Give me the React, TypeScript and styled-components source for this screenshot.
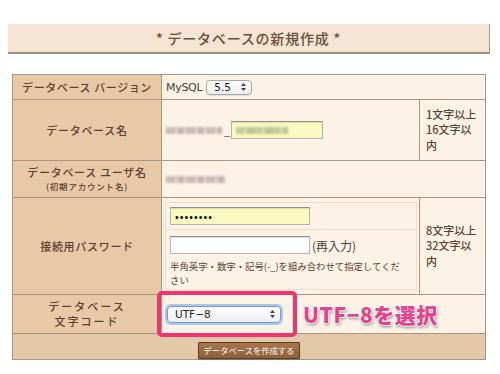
import React from "react";
import styled, { createGlobalStyle } from "styled-components";

const GlobalStyle = createGlobalStyle`
  html, body {
    margin: 0;
    padding: 0;
    background: #fff;
  }
  body {
    font-family: "Noto Sans CJK JP", "DejaVu Sans", sans-serif;
    color: #5b4131;
  }
`;

const Page = styled.div`
  width: 500px;
  height: 374px;
  padding-top: 24px;
  box-sizing: border-box;
  overflow: hidden;
`;

const Heading = styled.h2`
  margin: 0 0 0 8px;
  width: 482px;
  height: 30px;
  box-sizing: border-box;
  background: #f3e4d3;
  border-bottom: 2px solid #a48e7a;
  border-right: 1px solid #b29c88;
  color: #6a4d3b;
  font-size: 14px;
  font-weight: 500;
  letter-spacing: 0.8px;
  line-height: 28px;
  text-align: center;
`;

const FormTable = styled.table`
  margin: 20px 0 0 12px;
  width: 473px;
  border-collapse: collapse;
  table-layout: fixed;
  border: 1px solid #a9947f;
`;

const Col = styled.col<{ $w: number }>`
  width: ${(p) => p.$w}px;
`;

const Row = styled.tr<{ $h: number }>`
  height: ${(p) => p.$h}px;
`;

const LabelCell = styled.th<{ $spacing?: number }>`
  background: #e7c8a7;
  border: 1px solid #a9947f;
  color: #5b4131;
  font-size: 11px;
  font-weight: 500;
  letter-spacing: ${(p) => (p.$spacing ?? 0.7)}px;
  line-height: 15px;
  text-align: center;
  vertical-align: middle;
  padding: 0;
  white-space: nowrap;
`;

const SubLabel = styled.span`
  display: block;
  font-size: 8.5px;
  letter-spacing: 0.8px;
  line-height: 13px;
`;

const ValueCell = styled.td<{ $pad?: string }>`
  background: #fdf2e6;
  border: 1px solid #a9947f;
  color: #444;
  font-size: 11px;
  line-height: 15px;
  vertical-align: middle;
  padding: ${(p) => p.$pad ?? "0 4px"};
`;

const NoteCell = styled.td`
  background: #fdf2e6;
  border: 1px solid #a9947f;
  color: #5b4131;
  font-size: 11px;
  font-weight: 500;
  line-height: 15.5px;
  vertical-align: middle;
  padding: 0 4px 0 6px;
  white-space: nowrap;
`;

const FooterCell = styled.td`
  background: #e3c8aa;
  border: 1px solid #a9947f;
  text-align: center;
  vertical-align: middle;
  padding: 0;
`;

const Line = styled.div`
  display: flex;
  align-items: center;
`;

const Mosaic = styled.span<{ $w: number; $tone: "brown" | "green" }>`
  display: inline-block;
  width: ${(p) => p.$w}px;
  height: 7px;
  background: ${(p) =>
    p.$tone === "brown"
      ? "repeating-linear-gradient(90deg, #cbbdb6 0 9px, #ddd1ca 9px 12px, #c4b6ae 12px 18px, #e6ddd6 18px 20px)"
      : "repeating-linear-gradient(90deg, #c4cc9a 0 8px, #d6dca8 8px 11px, #bcc493 11px 18px)"};
  filter: blur(0.8px);
`;

const TextInput = styled.span<{ $w: number; $fill?: boolean }>`
  display: inline-flex;
  align-items: center;
  box-sizing: border-box;
  width: ${(p) => p.$w}px;
  height: 18px;
  padding: 0 4px;
  background: ${(p) => (p.$fill ? "#f9fbc0" : "#fff")};
  border: 1px solid #b4b4b4;
  border-top-color: #8e8e8e;
  box-shadow: inset 0 1px 1px rgba(0, 0, 0, 0.12);
  color: #111;
  font-size: 11px;
  letter-spacing: 1px;
`;

const Underscore = styled.span`
  margin: 0 1px 0 2px;
  color: #555;
  font-size: 11px;
`;

const SelectBox = styled.span<{ $w: number; $focus?: boolean }>`
  display: inline-flex;
  align-items: center;
  justify-content: space-between;
  box-sizing: border-box;
  width: ${(p) => p.$w}px;
  height: ${(p) => (p.$focus ? 17 : 15)}px;
  padding: 0 5px 0 7px;
  border-radius: 4px;
  background: linear-gradient(#ffffff, #ededed);
  border: 1px solid ${(p) => (p.$focus ? "#6f9bd1" : "#a6a6a6")};
  box-shadow: ${(p) =>
    p.$focus ? "0 0 0 2px #a9c7ec, inset 0 1px 0 #fff" : "0 1px 0 rgba(0,0,0,0.08)"};
  color: #222;
  font-family: "DejaVu Sans", sans-serif;
  font-size: 10.5px;
  line-height: 1;
`;

const VersionLabel = styled.span`
  margin-right: 4px;
  color: #444;
  font-family: "DejaVu Sans", sans-serif;
  font-size: 11px;
  letter-spacing: -0.3px;
`;

const Arrows = () => (
  <svg width="5" height="8" viewBox="0 0 5 8">
    <path d="M2.5 0 L5 3 L0 3 Z M2.5 8 L5 5 L0 5 Z" fill="#444" />
  </svg>
);

const PasswordBox = styled.div`
  display: flex;
  flex-direction: column;
  border: 1px solid #eddccb;
`;

const PasswordPart = styled.div<{ $pad: string; $last?: boolean }>`
  padding: ${(p) => p.$pad};
  border-bottom: ${(p) => (p.$last ? "none" : "1px solid #eddccb")};
`;

const Reenter = styled.span`
  margin-left: 2px;
  color: #444;
  font-size: 12px;
`;

const Hint = styled.p`
  margin: 5px 0 0;
  color: #5b4131;
  font-size: 9.4px;
  line-height: 14px;
  white-space: nowrap;
`;

const CharsetLine = styled.div`
  display: flex;
  align-items: center;
  padding-left: 1px;
`;

const Marked = styled.span`
  position: relative;
  display: inline-flex;
`;

const Highlight = styled.span`
  position: absolute;
  left: -10px;
  top: -15px;
  width: 140px;
  height: 46px;
  box-sizing: border-box;
  border: 4px solid #ef3470;
  border-radius: 5px;
  pointer-events: none;
`;

const Callout = styled.span`
  margin-left: 22px;
  color: #e6418a;
  font-family: "Noto Sans CJK JP", sans-serif;
  font-size: 21px;
  font-weight: 900;
  letter-spacing: 0.5px;
  line-height: 24px;
  text-shadow: 1px 0 0 #fff, -1px 0 0 #fff, 0 1px 0 #fff, 0 -1px 0 #fff,
    1px 2px 3px rgba(0, 0, 0, 0.45);
`;

const SubmitButton = styled.button`
  height: 17px;
  padding: 0 5px;
  background: linear-gradient(#a8764d, #8e5f3a);
  border: 1px solid #5f3d24;
  border-radius: 1px;
  color: #fff;
  font-family: "Noto Sans CJK JP", sans-serif;
  font-size: 8.3px;
  line-height: 15px;
  letter-spacing: 0;
  box-shadow: 0 1px 1px rgba(0, 0, 0, 0.25);
`;

export default function App() {
  return (
    <Page>
      <GlobalStyle />
      <Heading>* データベースの新規作成 *</Heading>
      <FormTable>
        <colgroup>
          <Col $w={149} />
          <Col $w={258} />
          <Col $w={66} />
        </colgroup>
        <tbody>
          <Row $h={25}>
            <LabelCell $spacing={0.6}>データベース バージョン</LabelCell>
            <ValueCell colSpan={2}>
              <Line>
                <VersionLabel>MySQL</VersionLabel>
                <SelectBox $w={46}>
                  5.5
                  <Arrows />
                </SelectBox>
              </Line>
            </ValueCell>
          </Row>
          <Row $h={61}>
            <LabelCell>データベース名</LabelCell>
            <ValueCell>
              <Line>
                <Mosaic $w={56} $tone="brown" />
                <Underscore>_</Underscore>
                <TextInput $w={92} $fill>
                  <Mosaic $w={52} $tone="green" />
                </TextInput>
              </Line>
            </ValueCell>
            <NoteCell>
              1文字以上
              <br />
              16文字以
              <br />内
            </NoteCell>
          </Row>
          <Row $h={37}>
            <LabelCell>
              データベース ユーザ名
              <SubLabel>(初期アカウント名)</SubLabel>
            </LabelCell>
            <ValueCell colSpan={2}>
              <Line>
                <Mosaic $w={60} $tone="brown" />
              </Line>
            </ValueCell>
          </Row>
          <Row $h={96}>
            <LabelCell>接続用パスワード</LabelCell>
            <ValueCell $pad="4px 2px 4px 3px">
              <PasswordBox>
                <PasswordPart $pad="4px 4px 4px">
                  <TextInput $w={140} $fill>
                    ••••••••
                  </TextInput>
                </PasswordPart>
                <PasswordPart $pad="6px 4px 2px 4px" $last>
                  <Line>
                    <TextInput $w={140} />
                    <Reenter>(再入力)</Reenter>
                  </Line>
                  <Hint>
                    半角英字・数字・記号(-_)を組み合わせて指定してくだ
                    <br />
                    さい
                  </Hint>
                </PasswordPart>
              </PasswordBox>
            </ValueCell>
            <NoteCell>
              8文字以上
              <br />
              32文字以
              <br />内
            </NoteCell>
          </Row>
          <Row $h={39}>
            <LabelCell $spacing={2}>
              データベース
              <br />
              文字コード
            </LabelCell>
            <ValueCell colSpan={2}>
              <CharsetLine>
                <Marked>
                  <SelectBox $w={114} $focus>
                    UTF−8
                    <Arrows />
                  </SelectBox>
                  <Highlight />
                </Marked>
                <Callout>UTF−8を選択</Callout>
              </CharsetLine>
            </ValueCell>
          </Row>
          <Row $h={26}>
            <FooterCell colSpan={3}>
              <SubmitButton type="button">データベースを作成する</SubmitButton>
            </FooterCell>
          </Row>
        </tbody>
      </FormTable>
    </Page>
  );
}
